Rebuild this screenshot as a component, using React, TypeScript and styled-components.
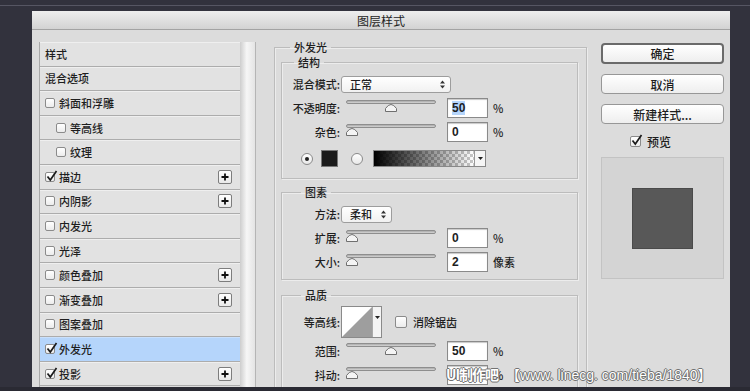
import React from "react";
import styled, { createGlobalStyle, css } from "styled-components";

const GlobalStyle = createGlobalStyle`
  html, body {
    margin: 0;
    padding: 0;
    background: #32323d;
  }
  body {
    font-family: "Noto Sans CJK SC", "Liberation Sans", sans-serif;
    color: #1e1e1e;
  }
`;

const Page = styled.div`
  width: 750px;
  height: 391px;
  position: relative;
  overflow: hidden;
  background: #32323d;
  display: flex;
  flex-direction: column;
`;

const TopStrip = styled.div`
  height: 5px;
  flex-shrink: 0;
  border-bottom: 1px solid #565663;
`;

const BottomStrip = styled.div`
  height: 4px;
  flex-shrink: 0;
  background: #2a2a33;
`;

const Dialog = styled.div`
  margin: 5px 0 0 32px;
  width: 698px;
  flex: 1;
  min-height: 0;
  background: #dcdcdc;
  display: flex;
  flex-direction: column;
  overflow: hidden;
`;

const TitleBar = styled.div`
  height: 18px;
  flex-shrink: 0;
  border-bottom: 1px solid #a3a3a3;
  background: linear-gradient(#eeeeee, #d3d3d3);
  display: flex;
  align-items: center;
  justify-content: center;
  font-size: 12px;
  color: #1e1e1e;
`;

const Body = styled.div`
  flex: 1;
  min-height: 0;
  display: flex;
  align-items: flex-start;
  padding: 12px 0 0 7px;
`;

/* ---------- left style list ---------- */

const StyleList = styled.div`
  display: flex;
  height: 360px;
  flex-shrink: 0;
`;

const Rows = styled.div`
  width: 200px;
  border-left: 1px solid #a9a9a9;
  display: flex;
  flex-direction: column;
`;

const ScrollTrack = styled.div`
  width: 15px;
  background: linear-gradient(to right, #cdcdcd, #f6f6f6 45%, #e4e4e4);
  border-right: 1px solid #b5b5b5;
`;

const StyleRow = styled.div<{ $selected?: boolean; $indent?: boolean }>`
  height: 24.6px;
  box-sizing: border-box;
  flex-shrink: 0;
  display: flex;
  align-items: center;
  gap: 4px;
  padding: 0 5px 0 ${(p) => (p.$indent ? "16px" : "5px")};
  background: ${(p) => (p.$selected ? "#b5d5fb" : "#e2e2e2")};
  border-bottom: 1px solid #acacac;
  box-shadow: inset 0 1px 0 ${(p) => (p.$selected ? "#c9e0fc" : "#efefef")};
  font-size: 11px;
  font-weight: 500;
`;

const RowLabel = styled.span`
  flex: 1;
  white-space: nowrap;
`;

const PlusButton = styled.span`
  width: 12px;
  height: 12px;
  border: 1px solid #7d7d7d;
  border-radius: 2px;
  background: linear-gradient(#ffffff, #e9e9e9);
  display: flex;
  align-items: center;
  justify-content: center;
  margin-right: 3px;
`;

const Box = styled.span<{ $size?: number }>`
  position: relative;
  flex-shrink: 0;
  box-sizing: border-box;
  width: ${(p) => p.$size ?? 10}px;
  height: ${(p) => p.$size ?? 10}px;
  border: 1px solid #8b8b8b;
  border-radius: 2px;
  background: linear-gradient(#ffffff, #ececec);
  svg {
    position: absolute;
    left: 0;
    top: -3px;
  }
`;

function Checkbox({ checked, size }: { checked?: boolean; size?: number }) {
  return (
    <Box $size={size}>
      {checked && (
        <svg width="13" height="13" viewBox="0 0 13 13">
          <path d="M1.5 6.5 L4.3 10 L10.5 1" fill="none" stroke="#1b1b1b" strokeWidth="1.7" />
        </svg>
      )}
    </Box>
  );
}

type Item = {
  label: string;
  check?: boolean;
  on?: boolean;
  indent?: boolean;
  plus?: boolean;
  selected?: boolean;
};

const items: Item[] = [
  { label: "样式" },
  { label: "混合选项" },
  { label: "斜面和浮雕", check: true },
  { label: "等高线", check: true, indent: true },
  { label: "纹理", check: true, indent: true },
  { label: "描边", check: true, on: true, plus: true },
  { label: "内阴影", check: true, plus: true },
  { label: "内发光", check: true },
  { label: "光泽", check: true },
  { label: "颜色叠加", check: true, plus: true },
  { label: "渐变叠加", check: true, plus: true },
  { label: "图案叠加", check: true },
  { label: "外发光", check: true, on: true, selected: true },
  { label: "投影", check: true, on: true, plus: true },
];

/* ---------- middle settings ---------- */

const Middle = styled.div`
  margin: -2px 0 0 18px;
  width: 313px;
  flex-shrink: 0;
`;

const Group = styled.fieldset<{ $outer?: boolean; $gapTop?: number }>`
  margin: ${(p) => p.$gapTop ?? 0}px 0 0 0;
  min-inline-size: 0;
  box-sizing: border-box;
  border: 1px solid #bcbcbc;
  box-shadow: inset 1px 1px 0 #ececec, 1px 1px 0 #ececec;
  ${(p) =>
    p.$outer
      ? css`
          padding: 0 8px 0 6px;
          height: 370px;
        `
      : css`
          padding: 3px 4px 5px 4px;
        `}
`;

const Legend = styled.legend<{ $indent: number }>`
  margin-left: ${(p) => p.$indent}px;
  padding: 0 4px;
  font-size: 11px;
  line-height: 14px;
  font-weight: 500;
`;

const Row = styled.div<{ $h?: number }>`
  height: ${(p) => p.$h ?? 24}px;
  display: flex;
  align-items: center;
  font-size: 11px;
  font-weight: 500;
`;

const Label = styled.span`
  width: 54px;
  flex-shrink: 0;
  text-align: right;
  white-space: nowrap;
`;

const Select = styled.div<{ $w: number }>`
  margin-left: 1px;
  width: ${(p) => p.$w}px;
  height: 17px;
  box-sizing: border-box;
  border: 1px solid #9d9d9d;
  border-radius: 3px;
  background: linear-gradient(#ffffff, #f1f1f1);
  display: flex;
  align-items: center;
  justify-content: space-between;
  padding: 0 5px 0 8px;
  font-size: 11px;
`;

function UpDown() {
  return (
    <svg width="5" height="9" viewBox="0 0 5 9">
      <path d="M0 3.5 L2.5 0.5 L5 3.5 Z M0 5.5 L2.5 8.5 L5 5.5 Z" fill="#333" />
    </svg>
  );
}

function DownTick() {
  return (
    <svg width="5" height="3" viewBox="0 0 5 3">
      <path d="M0 0 L5 0 L2.5 3 Z" fill="#222" />
    </svg>
  );
}

const SliderBox = styled.div`
  position: relative;
  margin-left: 6px;
  width: 90px;
  height: 16px;
  flex-shrink: 0;
`;

const Track = styled.div`
  height: 4px;
  box-sizing: border-box;
  border: 1px solid #8e8e8e;
  border-radius: 3px;
  background: linear-gradient(#a9a9a9, #d6d6d6);
`;

const Thumb = styled.svg`
  position: absolute;
  top: 2px;
`;

function Slider({ value }: { value: number }) {
  return (
    <SliderBox>
      <Track />
      <Thumb width="12" height="10" viewBox="0 0 12 10" style={{ left: value * 0.77 }}>
        <path d="M0.5 9.5 L0.5 6.5 Q6 -1.5 11.5 6.5 L11.5 9.5 Z" fill="#f4f4f4" stroke="#6f6f6f" />
      </Thumb>
    </SliderBox>
  );
}

const NumberInput = styled.div`
  margin-left: 11px;
  width: 41px;
  height: 20px;
  box-sizing: border-box;
  border: 1px solid #8a8a8a;
  box-shadow: inset 0 1px 1px #c8c8c8;
  background: #ffffff;
  display: flex;
  align-items: center;
  padding-left: 4px;
  font-family: "Liberation Sans", sans-serif;
  font-size: 12px;
  font-weight: 700;
`;

const Selected = styled.span`
  background: #b5d5fb;
`;

const Unit = styled.span`
  margin-left: 5px;
  font-size: 11px;
`;

const Radio = styled.span<{ $on?: boolean }>`
  width: 12px;
  height: 12px;
  box-sizing: border-box;
  border-radius: 50%;
  border: 1px solid #8a8a8a;
  background: linear-gradient(#ffffff, #e8e8e8);
  display: flex;
  align-items: center;
  justify-content: center;
  &::after {
    content: "";
    width: 4px;
    height: 4px;
    border-radius: 50%;
    background: ${(p) => (p.$on ? "#222" : "transparent")};
  }
`;

const ColorRow = styled.div`
  height: 29px;
  display: flex;
  align-items: center;
  padding-left: 15px;
`;

const Swatch = styled.span`
  margin: 0 13px 0 8px;
  width: 17px;
  height: 17px;
  box-sizing: border-box;
  border: 1px solid #777;
  background: #1b1b1b;
`;

const GradientPicker = styled.div`
  margin-left: 10px;
  display: flex;
  height: 17px;
  box-sizing: border-box;
  border: 1px solid #888;
`;

const GradientStrip = styled.span`
  width: 100px;
  background: linear-gradient(to right, #000 0%, rgba(0, 0, 0, 0) 100%),
    repeating-conic-gradient(#c8c8c8 0 25%, #ffffff 0 50%) 0 0 / 6px 6px;
`;

const Dropper = styled.span`
  width: 10px;
  border-left: 1px solid #999;
  background: #f5f5f5;
  display: flex;
  align-items: center;
  justify-content: center;
`;

const ContourBox = styled.div`
  margin-left: 1px;
  width: 41px;
  height: 32px;
  box-sizing: border-box;
  border: 1px solid #8a8a8a;
  display: flex;
  background: #fff;
`;

const ContourDrop = styled.span`
  width: 9px;
  border-left: 1px solid #aaa;
  background: #f4f4f4;
  display: flex;
  justify-content: center;
  padding-top: 9px;
  box-sizing: border-box;
`;

const InlineCheck = styled.span`
  margin-left: 13px;
  display: flex;
  align-items: center;
  gap: 6px;
`;

/* ---------- right column ---------- */

const Right = styled.div`
  margin: 1px 0 0 14px;
  width: 123px;
  display: flex;
  flex-direction: column;
  flex-shrink: 0;
`;

const Button = styled.div<{ $primary?: boolean }>`
  height: ${(p) => (p.$primary ? 21 : 20)}px;
  box-sizing: border-box;
  margin-bottom: 10px;
  border: ${(p) => (p.$primary ? "2px solid #6a6a6a" : "1px solid #979797")};
  border-radius: 4px;
  background: linear-gradient(#ffffff, #eeeeee);
  display: flex;
  align-items: center;
  justify-content: center;
  font-size: 12px;
  font-weight: 500;
`;

const PreviewToggle = styled.div`
  margin-top: -3px;
  padding-left: 29px;
  height: 20px;
  display: flex;
  align-items: center;
  gap: 6px;
  font-size: 12px;
  font-weight: 500;
`;

const Preview = styled.div`
  margin-top: 6px;
  height: 122px;
  box-sizing: border-box;
  border: 1px solid #c3c3c3;
  background: #d4d4d4;
  display: flex;
  align-items: center;
  justify-content: center;
`;

const PreviewShape = styled.div`
  width: 61px;
  height: 61px;
  box-sizing: border-box;
  border: 1px solid #4a4a4a;
  background: #585858;
`;

/* ---------- watermark ---------- */

const Watermark = styled.div`
  position: absolute;
  left: 446px;
  top: 364px;
  display: flex;
  align-items: center;
  gap: 8px;
  color: #ffffff;
  white-space: nowrap;
  text-shadow: 0 0 1px #555, 1px 0 0 #777, -1px 0 0 #777, 0 1px 0 #777, 0 -1px 0 #777;
`;

const MarkName = styled.span`
  font-family: "Noto Sans CJK SC", sans-serif;
  font-size: 14px;
  font-weight: 700;
  letter-spacing: -1px;
`;

const MarkUrl = styled.span`
  font-family: "Liberation Sans", "Noto Sans CJK SC", sans-serif;
  font-size: 14px;
`;

export default function App() {
  return (
    <>
      <GlobalStyle />
      <Page>
        <TopStrip />
        <Dialog>
          <TitleBar>图层样式</TitleBar>
          <Body>
            <StyleList>
              <Rows>
                {items.map((it) => (
                  <StyleRow key={it.label} $selected={it.selected} $indent={it.indent}>
                    {it.check && <Checkbox checked={it.on} />}
                    <RowLabel>{it.label}</RowLabel>
                    {it.plus && (
                      <PlusButton>
                        <svg width="8" height="8" viewBox="0 0 8 8">
                          <path d="M4 0.5 V7.5 M0.5 4 H7.5" stroke="#111" strokeWidth="1.8" />
                        </svg>
                      </PlusButton>
                    )}
                  </StyleRow>
                ))}
              </Rows>
              <ScrollTrack />
            </StyleList>

            <Middle>
              <Group $outer>
                <Legend $indent={9}>外发光</Legend>
                <Group $gapTop={1}>
                  <Legend $indent={8}>结构</Legend>
                  <Row>
                    <Label>混合模式:</Label>
                    <Select $w={110}>
                      正常
                      <UpDown />
                    </Select>
                  </Row>
                  <Row>
                    <Label>不透明度:</Label>
                    <Slider value={50} />
                    <NumberInput>
                      <Selected>50</Selected>
                    </NumberInput>
                    <Unit>%</Unit>
                  </Row>
                  <Row>
                    <Label>杂色:</Label>
                    <Slider value={0} />
                    <NumberInput>0</NumberInput>
                    <Unit>%</Unit>
                  </Row>
                  <ColorRow>
                    <Radio $on />
                    <Swatch />
                    <Radio />
                    <GradientPicker>
                      <GradientStrip />
                      <Dropper>
                        <DownTick />
                      </Dropper>
                    </GradientPicker>
                  </ColorRow>
                </Group>

                <Group $gapTop={6}>
                  <Legend $indent={15}>图素</Legend>
                  <Row>
                    <Label>方法:</Label>
                    <Select $w={51}>
                      柔和
                      <UpDown />
                    </Select>
                  </Row>
                  <Row>
                    <Label>扩展:</Label>
                    <Slider value={0} />
                    <NumberInput>0</NumberInput>
                    <Unit>%</Unit>
                  </Row>
                  <Row>
                    <Label>大小:</Label>
                    <Slider value={0} />
                    <NumberInput>2</NumberInput>
                    <Unit>像素</Unit>
                  </Row>
                </Group>

                <Group $gapTop={8}>
                  <Legend $indent={15}>品质</Legend>
                  <Row $h={34}>
                    <Label>等高线:</Label>
                    <ContourBox>
                      <svg width="30" height="30" viewBox="0 0 30 30">
                        <path d="M0 30 L30 0 L30 30 Z" fill="#9e9e9e" />
                      </svg>
                      <ContourDrop>
                        <DownTick />
                      </ContourDrop>
                    </ContourBox>
                    <InlineCheck>
                      <Checkbox size={12} />
                      消除锯齿
                    </InlineCheck>
                  </Row>
                  <Row>
                    <Label>范围:</Label>
                    <Slider value={50} />
                    <NumberInput>50</NumberInput>
                    <Unit>%</Unit>
                  </Row>
                  <Row>
                    <Label>抖动:</Label>
                    <Slider value={0} />
                    <NumberInput>0</NumberInput>
                    <Unit>%</Unit>
                  </Row>
                </Group>
              </Group>
            </Middle>

            <Right>
              <Button $primary>确定</Button>
              <Button>取消</Button>
              <Button>新建样式...</Button>
              <PreviewToggle>
                <Checkbox checked size={11} />
                预览
              </PreviewToggle>
              <Preview>
                <PreviewShape />
              </Preview>
            </Right>
          </Body>
        </Dialog>
        <BottomStrip />
        <Watermark>
          <MarkName>UI制作吧</MarkName>
          <MarkUrl>【www. linecg. com/tieba/1840】</MarkUrl>
        </Watermark>
      </Page>
    </>
  );
}
